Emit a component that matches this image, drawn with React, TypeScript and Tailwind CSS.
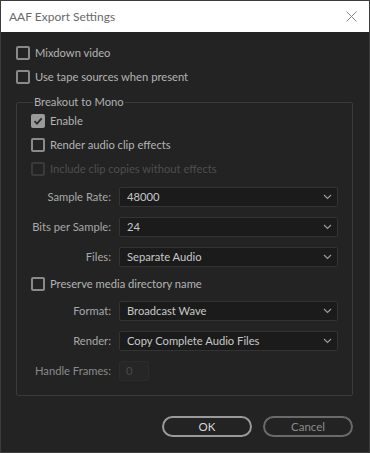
import React from "react";

const font = { fontFamily: "Lato, 'Noto Sans', sans-serif" };

function Box({ checked = false, disabled = false }: { checked?: boolean; disabled?: boolean }) {
  if (checked) {
    return (
      <span className="w-[14px] h-[14px] rounded-[2px] bg-[#9a9a9a] flex items-center justify-center shrink-0">
        <svg width="10" height="10" viewBox="0 0 10 10">
          <path d="M1.5 5.2 L4 7.6 L8.6 2.4" stroke="#2a2a2a" strokeWidth="1.8" fill="none" />
        </svg>
      </span>
    );
  }
  return (
    <span
      className={`w-[14px] h-[14px] rounded-[2px] border-2 shrink-0 ${
        disabled ? "border-[#3a3a3a]" : "border-[#8a8a8a]"
      }`}
    />
  );
}

function Check({ label, checked, disabled }: { label: string; checked?: boolean; disabled?: boolean }) {
  return (
    <div className="flex items-center gap-[5px] h-[14px]">
      <Box checked={checked} disabled={disabled} />
      <span className={`text-[11.2px] leading-none whitespace-nowrap ${disabled ? "text-[#4e4e4e]" : "text-[#b4b4b4]"}`}>{label}</span>
    </div>
  );
}

function Chevron() {
  return (
    <svg width="9" height="6" viewBox="0 0 9 6" className="shrink-0">
      <path d="M1 1 L4.5 4.5 L8 1" stroke="#9a9a9a" strokeWidth="1.2" fill="none" />
    </svg>
  );
}

function Label({ text, dim }: { text: string; dim?: boolean }) {
  return (
    <span className={`w-[102px] shrink-0 text-right pr-[8px] text-[11.2px] leading-none whitespace-nowrap ${dim ? "text-[#8a8a8a]" : "text-[#a8a8a8]"}`}>
      {text}
    </span>
  );
}

function SelectRow({ label, value }: { label: string; value: string }) {
  return (
    <div className="flex items-center h-[20px]">
      <Label text={label} />
      <div className="w-[219px] h-[20px] bg-[#1b1b1b] border border-[#333333] rounded-[2px] flex items-center justify-between pl-[7px] pr-[5px]">
        <span className="text-[11.2px] text-[#c8c8c8] leading-none">{value}</span>
        <Chevron />
      </div>
    </div>
  );
}

export default function App() {
  return (
    <div className="w-[370px] h-[453px] bg-[#232323] border border-[#3c3c3c] flex flex-col" style={font}>
      <div className="h-[31px] bg-white flex items-center justify-between pl-[8px] pr-[12px] shrink-0">
        <span className="text-[12px] text-[#6a6a6a]">AAF Export Settings</span>
        <svg width="11" height="11" viewBox="0 0 11 11">
          <path d="M0.5 0.5 L10.5 10.5 M10.5 0.5 L0.5 10.5" stroke="#8a8a8a" strokeWidth="1" />
        </svg>
      </div>
      <div className="flex flex-col pl-[15px] pr-[16px] pt-[14px]">
        <div className="flex flex-col gap-[10px]">
          <Check label="Mixdown video" />
          <Check label="Use tape sources when present" />
        </div>
        <fieldset className="mt-[12px] border border-[#3a3a3a] rounded-[2px] pb-[14px]">
          <legend className="ml-[16px] px-[1px] h-[12px] text-[11.2px] text-[#b0b0b0] leading-[12px]">Breakout to Mono</legend>
          <div className="pl-[14px] pt-[6px]">
            <div className="flex flex-col gap-[10px]">
              <Check label="Enable" checked />
              <Check label="Render audio clip effects" />
              <Check label="Include clip copies without effects" disabled />
            </div>
            <div className="flex flex-col gap-[10px] mt-[11px] ml-[-14px]">
              <SelectRow label="Sample Rate:" value="48000" />
              <SelectRow label="Bits per Sample:" value="24" />
              <SelectRow label="Files:" value="Separate Audio" />
            </div>
            <div className="mt-[10px] mb-[10px]">
              <Check label="Preserve media directory name" />
            </div>
            <div className="flex flex-col gap-[10px] ml-[-14px]">
              <SelectRow label="Format:" value="Broadcast Wave" />
              <SelectRow label="Render:" value="Copy Complete Audio Files" />
              <div className="flex items-center h-[20px]">
                <Label text="Handle Frames:" dim />
                <div className="w-[30px] h-[20px] bg-[#262626] border border-[#2c2c2c] rounded-[2px] flex items-center pl-[6px]">
                  <span className="text-[11.2px] text-[#4a4a4a] leading-none">0</span>
                </div>
              </div>
            </div>
          </div>
        </fieldset>
        <div className="flex justify-end gap-[11px] mt-[20px]">
          <button className="w-[90px] h-[21px] rounded-full border-2 border-[#9a9a9a] text-[11.5px] text-[#d8d8d8] leading-none">OK</button>
          <button className="w-[90px] h-[21px] rounded-full border-2 border-[#6a6a6a] text-[11.5px] text-[#8c8c8c] leading-none">Cancel</button>
        </div>
      </div>
    </div>
  );
}
